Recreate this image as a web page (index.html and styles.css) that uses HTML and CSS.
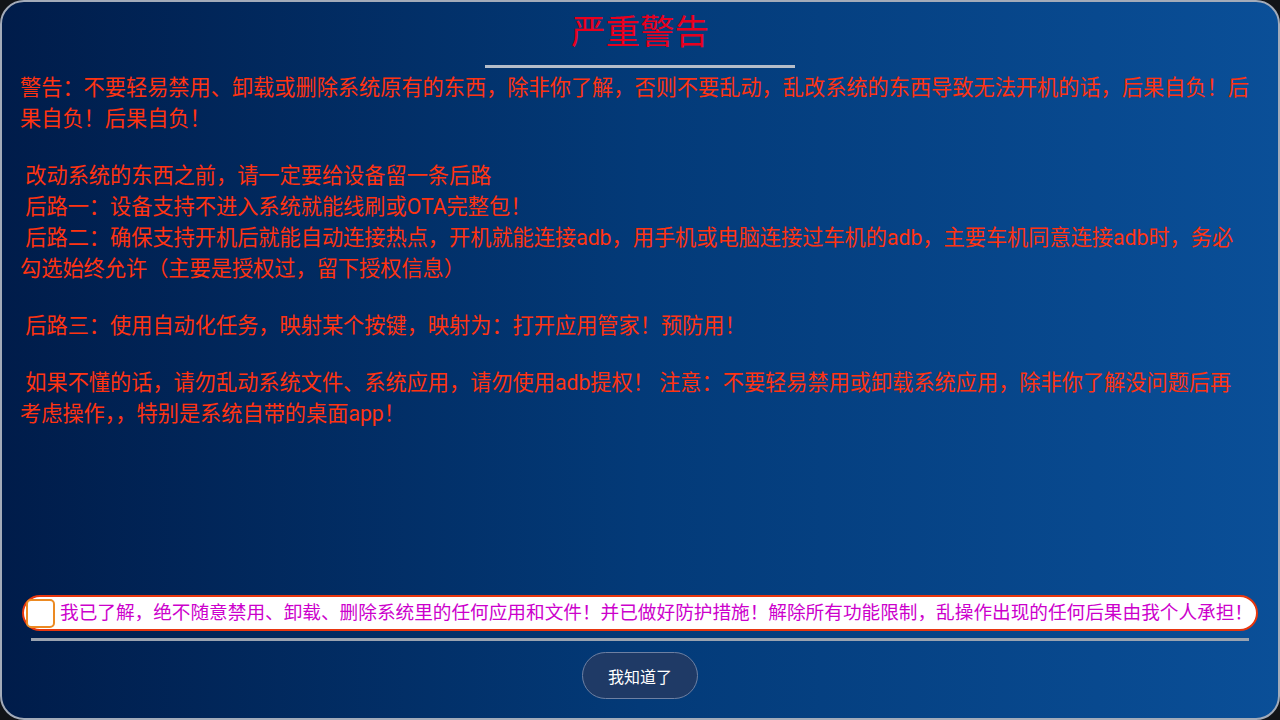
FILE: index.html
```html
<!DOCTYPE html>
<html lang="zh-CN">
<head>
<meta charset="utf-8">
<title>严重警告</title>
<link rel="stylesheet" href="styles.css">
</head>
<body>
<div class="frame">
  <h1 class="title">严重警告</h1>
  <div class="title-rule"></div>
  <div class="content">
    <p class="para">警告：不要轻易禁用、卸载或删除系统原有的东西，除非你了解，否则不要乱动，乱改系统的东西导致无法开机的话，后果自负！后果自负！后果自负！</p>
    <p class="para"> 改动系统的东西之前，请一定要给设备留一条后路
 后路一：设备支持不进入系统就能线刷或OTA完整包！
 后路二：确保支持开机后就能自动连接热点，开机就能连接adb，用手机或电脑连接过车机的adb，主要车机同意连接adb时，务必勾选始终允许（主要是授权过，留下授权信息）</p>
    <p class="para"> 后路三：使用自动化任务，映射某个按键，映射为：打开应用管家！预防用！</p>
    <p class="para"> 如果不懂的话，请勿乱动系统文件、系统应用，请勿使用adb提权！ 注意：不要轻易禁用或卸载系统应用，除非你了解没问题后再考虑操作，，特别是系统自带的桌面app！</p>
  </div>
  <div class="footer">
    <label class="agree">
      <span class="box"></span>
      <span class="agree-text">我已了解，绝不随意禁用、卸载、删除系统里的任何应用和文件！并已做好防护措施！解除所有功能限制，乱操作出现的任何后果由我个人承担！</span>
    </label>
    <div class="footer-rule"></div>
    <button class="ok">我知道了</button>
  </div>
</div>
</body>
</html>
```

FILE: styles.css
```css
html, body {
  margin: 0;
  padding: 0;
  background: #121418;
}
body {
  width: 1280px;
  height: 720px;
  overflow: hidden;
  font-family: Roboto, "Noto Sans CJK SC", sans-serif;
}
.frame {
  box-sizing: border-box;
  width: 1280px;
  height: 720px;
  border: 2px solid #a3abb9;
  border-radius: 24px;
  background: linear-gradient(to right, #001c4a 0%, #033a78 50%, #0a4f98 100%);
  display: flex;
  flex-direction: column;
  overflow: hidden;
}
.title {
  margin: 10px 0 0;
  font-size: 34.5px;
  line-height: 40px;
  font-weight: normal;
  color: #e8001e;
  text-align: center;
}
.title-rule {
  align-self: center;
  width: 310px;
  height: 3px;
  margin-top: 13px;
  background: #b5bdc9;
}
.content {
  flex: 1;
  padding: 4px 26px 0 18px;
}
.para {
  margin: 0 0 26px;
  white-space: pre-wrap;
  font-size: 21.2px;
  line-height: 31px;
  color: #ff3311;
}
.footer {
  display: flex;
  flex-direction: column;
  align-items: center;
  padding-bottom: 19px;
}
.agree {
  align-self: stretch;
  margin: 0 20px;
  height: 36px;
  box-sizing: border-box;
  border: 2px solid #e8360e;
  border-radius: 18px;
  background: #ffffff;
  display: flex;
  align-items: center;
  padding-left: 2px;
}
.box {
  box-sizing: border-box;
  width: 29px;
  height: 29px;
  border: 2px solid #ec8a22;
  border-radius: 5px;
  background: #fff;
  flex: none;
}
.agree-text {
  margin-left: 5px;
  font-size: 18.65px;
  line-height: 24px;
  color: #cc00cc;
  white-space: nowrap;
}
.footer-rule {
  align-self: stretch;
  margin: 7px 29px 0;
  height: 3px;
  background: #9aa3b0;
}
.ok {
  margin-top: 11px;
  width: 116px;
  height: 47px;
  border: 1px solid #6e80a2;
  border-radius: 24px;
  background: #1f3a66;
  color: #ffffff;
  font-family: Roboto, "Noto Sans CJK SC", sans-serif;
  font-size: 16px;
  padding: 0;
}
```
